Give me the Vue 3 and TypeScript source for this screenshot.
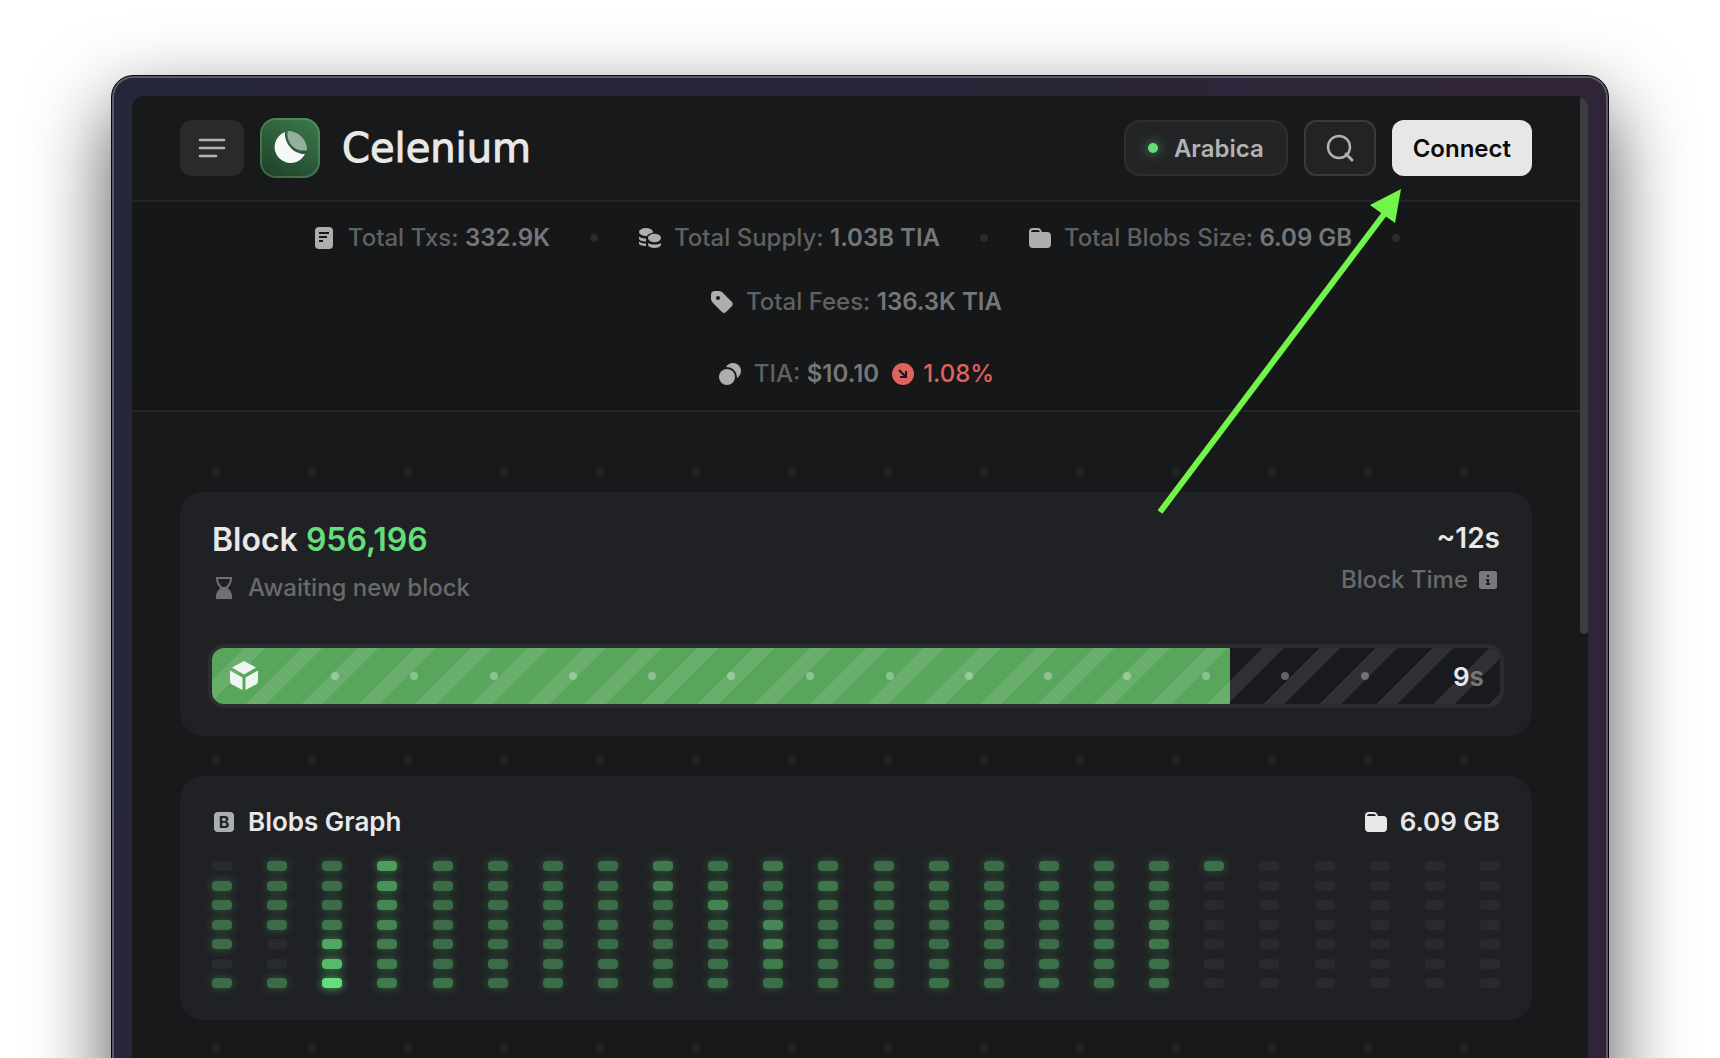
<script setup lang="ts">
interface Blob {
  id: string
  level: number
}

const stats = [
  { icon: 'doc', label: 'Total Txs:', value: '332.9K' },
  { icon: 'coins', label: 'Total Supply:', value: '1.03B TIA' },
  { icon: 'folder', label: 'Total Blobs Size:', value: '6.09 GB' },
  { icon: 'tag', label: 'Total Fees:', value: '136.3K TIA' },
]

const progress = 79
const progressDots = 14

// Activity per day, in percent of the busiest day; one array is one week.
const weeks: number[][] = [
  [0, 40, 40, 40, 40, 0, 40],
  [40, 40, 40, 40, 0, 0, 40],
  [40, 40, 40, 46, 72, 82, 100],
  [66, 60, 55, 53, 49, 49, 48],
  [41, 40, 40, 40, 40, 40, 44],
  [40, 40, 40, 40, 40, 40, 40],
  [40, 40, 40, 40, 40, 40, 40],
  [40, 40, 40, 40, 40, 40, 40],
  [47, 50, 40, 40, 40, 40, 40],
  [42, 44, 53, 41, 41, 42, 42],
  [46, 41, 43, 55, 55, 48, 41],
  [41, 45, 41, 40, 42, 40, 41],
  [40, 40, 40, 40, 41, 40, 41],
  [41, 41, 40, 40, 40, 40, 42],
  [40, 40, 41, 41, 40, 40, 40],
  [41, 41, 40, 40, 40, 42, 43],
  [41, 41, 41, 40, 43, 42, 42],
  [41, 41, 41, 45, 46, 42, 42],
  [42, 0, 0, 0, 0, 0, 0],
  [0, 0, 0, 0, 0, 0, 0],
  [0, 0, 0, 0, 0, 0, 0],
  [0, 0, 0, 0, 0, 0, 0],
  [0, 0, 0, 0, 0, 0, 0],
  [0, 0, 0, 0, 0, 0, 0],
]

const columns: Blob[][] = weeks.map((week, w) =>
  week.map((level, d) => ({ id: `${w}-${d}`, level })),
)

function pillStyle(level: number) {
  if (!level) return undefined
  return {
    background: `rgb(101 221 123 / ${level}%)`,
    boxShadow: `0 0 10px rgb(80 200 100 / ${Math.round(level * 0.9)}%)`,
  }
}
</script>

<template>
  <div class="stage">
    <div class="window">
      <div class="screen">
        <div class="page">
          <header class="header">
            <button class="menu" type="button" aria-label="Menu">
              <svg width="28" height="24" viewBox="0 0 28 24">
                <path d="M2 4h24M2 12h24M2 20h16" stroke="#b4b5b6" stroke-width="2.500" stroke-linecap="round" />
              </svg>
            </button>
            <a class="brand" href="#">
              <span class="logo">
                <svg width="34" height="34" viewBox="0 0 34 34">
                  <path d="M12 1C11 12 20 23 32 23A16 16 0 1 1 12 1Z" fill="#f5f8f6" />
                  <path d="M14.500 0C25 0 34 8 34 19C23 22 13 13 14.500 0Z" fill="#94b09c" />
                </svg>
              </span>
              <span class="brand-name">Celenium</span>
            </a>
            <div class="actions">
              <button class="network" type="button"><span class="live"></span>Arabica</button>
              <button class="search" type="button" aria-label="Search">
                <svg width="30" height="30" viewBox="0 0 30 30" fill="none" stroke="#b0b1b2" stroke-width="2.500">
                  <circle cx="14" cy="14" r="11" />
                  <path d="M21 21l6 6" stroke-width="3" stroke-linecap="round" />
                </svg>
              </button>
              <button class="connect" type="button">Connect</button>
            </div>
          </header>

          <section class="stats">
            <div class="stats-row">
              <template v-for="(s, i) in stats" :key="s.label">
                <div class="stat">
                  <svg class="icon" viewBox="0 0 24 24" fill="#adaeaf">
                    <template v-if="s.icon === 'doc'">
                      <rect x="3" y="1" width="18" height="22" rx="4" />
                      <path d="M7 7h10M7 11h8M7 15h4" stroke="#161719" stroke-width="2" />
                    </template>
                    <template v-else-if="s.icon === 'coins'">
                      <ellipse cx="8" cy="6" rx="7" ry="4" />
                      <path d="M1 10.500c1.500 1.500 4 2 7 2v3c-4 0-7-1-7-3z" />
                      <path d="M1 15.500c1.500 1.500 4 2 7 2v2.500c-4 0-7-1-7-2.500z" />
                      <ellipse cx="16.500" cy="12" rx="8" ry="5.500" fill="#161719" />
                      <ellipse cx="16.500" cy="12" rx="6.500" ry="4.200" />
                      <path d="M10 17c3 2 10 2 13 0v2c-1 4-12 4-13 0z" />
                    </template>
                    <path
                      v-else-if="s.icon === 'folder'"
                      fill-rule="evenodd"
                      d="M5 2h5q2 0 3 2l1 2h5a4 4 0 0 1 4 4v8a4 4 0 0 1-4 4H5a4 4 0 0 1-4-4V6a4 4 0 0 1 4-4zM3 6h9q-1-2-2-2H5q-2 0-2 2z"
                    />
                    <path
                      v-else
                      fill-rule="evenodd"
                      d="M1 9V5a4 4 0 0 1 4-4h4a5 5 0 0 1 4 2l9 9a3 3 0 0 1 0 4l-6 6a3 3 0 0 1-4 0l-9-9a6 6 0 0 1-2-4zM8 6a2 2 0 1 0 0 4a2 2 0 1 0 0-4z"
                    />
                  </svg>
                  <span>{{ s.label }} <b>{{ s.value }}</b></span>
                </div>
                <span v-if="i < stats.length - 1" class="sep"></span>
              </template>
            </div>
            <div class="stat">
              <svg class="icon" viewBox="0 0 24 24" fill="#adaeaf">
                <circle cx="15" cy="9" r="8" />
                <circle cx="9" cy="15" r="10" fill="#161719" />
                <circle cx="9" cy="15" r="8" />
              </svg>
              <span>TIA: <b>$10.10</b></span>
              <span class="change">
                <svg class="icon" viewBox="0 0 24 24">
                  <circle cx="12" cy="12" r="11" fill="#e0625c" />
                  <path d="M8 8l7 7M15 9v6H9" fill="none" stroke="#161719" stroke-width="2" />
                </svg>
                1.08%
              </span>
            </div>
          </section>

          <main class="main">
            <section class="card">
              <div class="block-head">
                <div class="block-left">
                  <h1>Block <span>956,196</span></h1>
                  <p class="sub">
                    <svg class="icon" viewBox="0 0 24 24" fill="none" stroke="#707173" stroke-width="2">
                      <path d="M4 2h16M5 2c0 6 2 8 5 10c-3 2-5 4-5 10h14c0-6-2-8-5-10c3-2 5-4 5-10" />
                      <path d="M5 22c0-5 2-8 5-10h4c3 2 5 5 5 10z" fill="#707173" />
                    </svg>
                    Awaiting new block
                  </p>
                </div>
                <div class="block-right">
                  <strong>~12s</strong>
                  <p class="sub tight">
                    Block Time
                    <svg class="icon" viewBox="0 0 24 24">
                      <rect x="3" y="3" width="18" height="18" rx="2" fill="#77787a" />
                      <path d="M11 7h2v2h-2zM10 11h3v4h1v2h-4v-2h1v-2h-1z" fill="#202125" />
                    </svg>
                  </p>
                </div>
              </div>
              <div class="bar">
                <div class="fill" :style="{ width: progress + '%' }"></div>
                <div class="bar-row">
                  <svg width="32" height="32" viewBox="0 0 32 32" fill="#eff6ef">
                    <path d="M16 1l12 6.500-12 7-12-7z" />
                    <path d="M2 10.500l12.500 7V30L4 24.500q-2-1-2-3z" />
                    <path d="M30 10.500l-12.500 7V30L28 24.500q2-1 2-3z" />
                  </svg>
                  <i v-for="n in progressDots" :key="n" class="tick"></i>
                  <span class="left">9<em>s</em></span>
                </div>
              </div>
            </section>

            <section class="card">
              <div class="graph-head">
                <h2><span class="badge">B</span>Blobs Graph</h2>
                <span class="total">
                  <svg class="icon" viewBox="0 0 24 24" fill="#e8e8e8" fill-rule="evenodd">
                    <path
                      d="M5 2h5q2 0 3 2l1 2h5a4 4 0 0 1 4 4v8a4 4 0 0 1-4 4H5a4 4 0 0 1-4-4V6a4 4 0 0 1 4-4zM3 6h9q-1-2-2-2H5q-2 0-2 2z"
                    />
                  </svg>
                  6.09 GB
                </span>
              </div>
              <div class="graph">
                <div v-for="(col, c) in columns" :key="c" class="week">
                  <i v-for="b in col" :key="b.id" class="pill" :style="pillStyle(b.level)"></i>
                </div>
              </div>
            </section>
          </main>
        </div>
        <div class="scrollbar"><div class="thumb"></div></div>
      </div>
      <svg class="arrow" width="250" height="330" viewBox="0 0 250 330" fill="#72f54a">
        <path d="M5 325L230 26" stroke="#72f54a" stroke-width="6" />
        <path d="M246 2L215 18L240 36Z" />
      </svg>
    </div>
  </div>
</template>

<style>
body {
  margin: 0;
  background: #fff;
  overflow: hidden;
}
</style>

<style scoped>
* {
  box-sizing: border-box;
}

.stage {
  height: 100vh;
  padding: 75px 111px 0;
  overflow: hidden;
  background: #fff;
  font-family: Inter, 'Liberation Sans', sans-serif;
  font-size: 24px;
  font-weight: 500;
  color: #e8e8e8;
}

.window {
  position: relative;
  min-height: 120vh;
  padding: 20px;
  border: 1px solid #08080a;
  border-radius: 22px;
  background: linear-gradient(100deg, #26263a, #2c2538 60%, #332438);
  box-shadow:
    inset 0 0 0 2px #5c5c66,
    0 32px 80px rgb(0 0 0 / 68%);
}

.screen {
  display: flex;
  min-height: 120vh;
  border-radius: 12px;
  overflow: hidden;
  background: #18191b;
}

.page {
  flex: 1;
  min-width: 0;
}

.scrollbar {
  width: 8px;
}

.thumb {
  height: 538px;
  border-radius: 4px;
  background: #3c3d3f;
}

button {
  display: flex;
  align-items: center;
  justify-content: center;
  height: 56px;
  padding: 0;
  border: 0;
  font: inherit;
  font-weight: 600;
}

.header {
  display: flex;
  align-items: center;
  gap: 16px;
  height: 106px;
  padding: 0 48px;
  border-bottom: 2px solid #232426;
  background: #18191b;
}

.menu {
  width: 64px;
  border-radius: 12px;
  background: #2a2b2d;
}

.brand {
  display: flex;
  align-items: center;
  gap: 22px;
  color: #e8e8e8;
  text-decoration: none;
}

.logo {
  display: flex;
  align-items: center;
  justify-content: center;
  width: 60px;
  height: 60px;
  border-radius: 16px;
  background: linear-gradient(30deg, #1d3e26, #3d7b4e);
  box-shadow: inset 0 0 0 2px rgb(120 190 135 / 32%);
}

.brand-name {
  font-family: 'DejaVu Sans', sans-serif;
  font-size: 40px;
  font-weight: 400;
  line-height: 48px;
  -webkit-text-stroke: 1px #e8e8e8;
}

.actions {
  display: flex;
  gap: 16px;
  margin-left: auto;
}

.network {
  gap: 16px;
  padding: 0 22px;
  border: 2px solid #2f3032;
  border-radius: 16px;
  background: #232426;
  color: #b2b3b4;
}

.live {
  width: 10px;
  height: 10px;
  border-radius: 50%;
  background: #65dd7b;
  box-shadow: 0 0 12px rgb(101 221 123 / 70%);
}

.search {
  width: 72px;
  border: 2px solid #3a3b3d;
  border-radius: 12px;
  background: #222325;
}

.connect {
  padding: 0 21px;
  border-radius: 12px;
  background: #e7e7e7;
  color: #0b0b0c;
}

.icon {
  flex: none;
  width: 24px;
  height: 24px;
}

.stats {
  display: flex;
  flex-direction: column;
  align-items: center;
  gap: 40px;
  padding: 20px 48px;
  border-bottom: 2px solid #232426;
  background: #161719;
}

.stats-row {
  display: flex;
  flex-wrap: wrap;
  align-items: center;
  justify-content: center;
  gap: 32px 40px;
}

.stat {
  display: flex;
  align-items: center;
  gap: 12px;
  line-height: 32px;
  color: #606163;
}

.stat b {
  font-weight: 600;
  color: #757678;
}

.sep {
  width: 8px;
  height: 8px;
  border-radius: 50%;
  background: #2a2b2d;
}

.change {
  display: flex;
  align-items: center;
  gap: 8px;
  color: #e0625c;
}

.main {
  display: flex;
  flex-direction: column;
  gap: 40px;
  margin: 0 48px;
  padding: 80px 0 40px;
  min-height: 100vh;
  background: radial-gradient(circle at 36px 60px, #232426 4px, transparent 5px) 0 0 / 96px 288px;
}

.card {
  padding: 32px;
  border-radius: 24px;
  background: #202125;
}

.block-head {
  display: flex;
  justify-content: space-between;
  margin-bottom: 48px;
}

.block-left {
  display: flex;
  flex-direction: column;
  gap: 20px;
}

.block-right {
  display: flex;
  flex-direction: column;
  align-items: flex-end;
  gap: 16px;
}

h1 {
  margin: 0;
  font-size: 32px;
  line-height: 32px;
  font-weight: 600;
}

h1 span {
  color: #65dd7b;
}

.block-right strong {
  font-size: 28px;
  line-height: 28px;
  font-weight: 600;
}

.sub {
  display: flex;
  align-items: center;
  gap: 12px;
  margin: 0;
  line-height: 24px;
  color: #696a6c;
}

.tight {
  gap: 8px;
}

.bar {
  position: relative;
  height: 56px;
  border-radius: 12px;
  background: #191a1e;
  box-shadow: 0 0 0 4px #2b2c30;
  overflow: hidden;
}

.fill {
  height: 56px;
  background: #58a55c;
}

.bar-row {
  position: absolute;
  inset: 0;
  display: flex;
  align-items: center;
  justify-content: space-between;
  padding: 0 16px;
  background: repeating-linear-gradient(
    135deg,
    transparent 0 23px,
    rgb(255 255 255 / 10%) 23px 38px,
    transparent 38px 40px
  );
}

.tick {
  width: 8px;
  height: 8px;
  border-radius: 50%;
  background: rgb(255 255 255 / 32%);
}

.left {
  width: 44px;
  text-align: right;
  font-size: 26px;
  font-weight: 600;
}

.left em {
  font-style: normal;
  color: #77787a;
}

.graph-head {
  display: flex;
  justify-content: space-between;
  margin-bottom: 25px;
  font-size: 26px;
  line-height: 28px;
  font-weight: 600;
}

h2 {
  display: flex;
  align-items: center;
  gap: 14px;
  margin: 0;
  font: inherit;
}

.badge {
  display: flex;
  align-items: center;
  justify-content: center;
  width: 20px;
  height: 20px;
  margin-left: 2px;
  border-radius: 4px;
  background: #adaeaf;
  color: #202125;
  font-size: 16px;
  font-weight: 700;
}

.total {
  display: flex;
  align-items: center;
  gap: 12px;
}

.graph {
  display: flex;
  justify-content: space-between;
  height: 127px;
}

.week {
  display: flex;
  flex-direction: column;
  justify-content: space-between;
}

.pill {
  width: 20px;
  height: 10px;
  border-radius: 4px;
  background: #292a2d;
}

.arrow {
  position: absolute;
  top: 111px;
  right: 203px;
}
</style>
